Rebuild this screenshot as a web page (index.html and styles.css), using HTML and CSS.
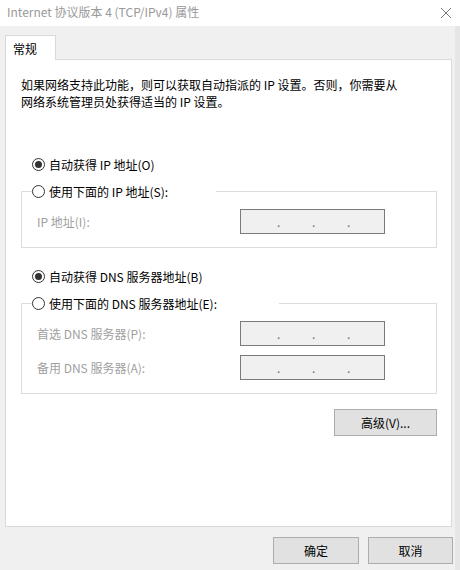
FILE: index.html
```html
<!DOCTYPE html>
<html lang="zh-CN">
<head>
<meta charset="utf-8">
<title>Internet 协议版本 4 (TCP/IPv4) 属性</title>
<link rel="stylesheet" href="styles.css">
</head>
<body>
<div class="window">
  <div class="titlebar">
    <span class="title">Internet 协议版本 4 (TCP/IPv4) 属性</span>
    <svg class="close" width="12" height="12" viewBox="0 0 12 12"><path d="M1 1 L11 11 M11 1 L1 11" stroke="#7a7a7a" stroke-width="1" fill="none"/></svg>
  </div>
  <div class="client">
    <div class="tabs"><div class="tab">常规</div></div>
    <div class="panel">
      <p class="desc">如果网络支持此功能，则可以获取自动指派的 IP 设置。否则，你需要从<br>网络系统管理员处获得适当的 IP 设置。</p>

      <div class="radio-row first"><span class="radio checked"></span><span>自动获得 IP 地址(O)</span></div>
      <fieldset class="group">
        <legend class="legend ip"><span class="radio"></span><span>使用下面的 IP 地址(S):</span></legend>
        <div class="field-row top"><span class="field-label">IP 地址(I):</span><div class="ipbox"><span class="dot">.</span><span class="dot">.</span><span class="dot">.</span></div></div>
      </fieldset>

      <div class="radio-row second"><span class="radio checked"></span><span>自动获得 DNS 服务器地址(B)</span></div>
      <fieldset class="group">
        <legend class="legend dns"><span class="radio"></span><span>使用下面的 DNS 服务器地址(E):</span></legend>
        <div class="field-row top dnsrow"><span class="field-label">首选 DNS 服务器(P):</span><div class="ipbox"><span class="dot">.</span><span class="dot">.</span><span class="dot">.</span></div></div>
        <div class="field-row next"><span class="field-label">备用 DNS 服务器(A):</span><div class="ipbox"><span class="dot">.</span><span class="dot">.</span><span class="dot">.</span></div></div>
      </fieldset>

      <div class="adv-row"><button class="btn adv">高级(V)...</button></div>
    </div>
    <div class="footer">
      <button class="btn ok">确定</button>
      <button class="btn cancel">取消</button>
    </div>
  </div>
</div>
</body>
</html>
```

FILE: styles.css
```css
* { box-sizing: border-box; }
html, body { margin: 0; padding: 0; }
body {
  width: 460px;
  height: 570px;
  overflow: hidden;
  background: #f0f0f0;
  font-family: "Noto Sans CJK SC", "Noto Sans", sans-serif;
  font-size: 12px;
  color: #000;
}
.window { width: 460px; height: 570px; display: flex; flex-direction: column; }
.titlebar {
  height: 26px;
  background: #fff;
  display: flex;
  align-items: center;
  justify-content: space-between;
  padding: 0 7px 2px 7px;
}
.title { color: #999; font-size: 12px; line-height: 16px; }
.close { margin-right: 1px; margin-top: 2px; }
.client {
  flex: 1;
  background: #f0f0f0;
  border-right: 5px solid #e6e6e6;
  padding: 9px 0 0 5px;
}
.tabs { display: flex; }
.tab {
  position: relative;
  z-index: 1;
  width: 51px;
  height: 25px;
  margin-bottom: -1px;
  background: #fff;
  border: 1px solid #d9d9d9;
  border-bottom: none;
  padding: 4px 0 0 7px;
  line-height: 17px;
}
.panel {
  width: 447px;
  height: 468px;
  background: #fff;
  border: 1px solid #d9d9d9;
  padding: 16px 14px 0 15px;
}
.desc { margin: 0; line-height: 17px; }
.radio-row, .legend { display: flex; align-items: center; line-height: 17px; height: 17px; }
.radio-row { margin-left: 11px; }
.radio-row.first { margin-top: 46px; }
.radio-row.second { margin-top: 20px; }
.radio {
  width: 13px;
  height: 13px;
  border: 1px solid #333;
  border-radius: 50%;
  background: #fff;
  margin-right: 4px;
  display: flex;
  align-items: center;
  justify-content: center;
  flex: none;
}
.radio.checked::after {
  content: "";
  width: 7px;
  height: 7px;
  border-radius: 50%;
  background: #333;
}
.group {
  margin: 10px 0 0 0;
  padding: 0 0 13px 10px;
  border: 1px solid #dcdcdc;
  min-inline-size: 0;
}
.legend { padding: 0; }
.legend.ip { width: 184px; }
.legend.dns { width: 247px; }
.field-row {
  display: grid;
  grid-template-columns: 203px 145px;
  align-items: center;
  margin-left: 5px;
}
.field-row.top { margin-top: 9px; }
.field-row.dnsrow { margin-top: 9px; }
.field-row.next { margin-top: 9px; }
.field-label { color: #a0a0a0; line-height: 17px; }
.ipbox {
  height: 25px;
  border: 1px solid #7a7a7a;
  background: #f0f0f0;
  display: flex;
  padding-left: 36px;
  align-items: center;
  color: #6d6d6d;
}
.dot { width: 35px; line-height: 12px; font-size: 12px; }
.adv-row { display: flex; justify-content: flex-end; margin-top: 15px; }
.btn {
  font-family: inherit;
  font-size: 12px;
  color: #000;
  background: #e1e1e1;
  border: 1px solid #adadad;
  height: 27px;
  padding: 0;
  border-radius: 0;
}
.adv { width: 103px; }
.footer {
  display: flex;
  justify-content: flex-end;
  gap: 9px;
  margin-top: 10px;
  padding-right: 0px;
  width: 448px;
}
.ok { width: 86px; }
.cancel { width: 85px; }
```
